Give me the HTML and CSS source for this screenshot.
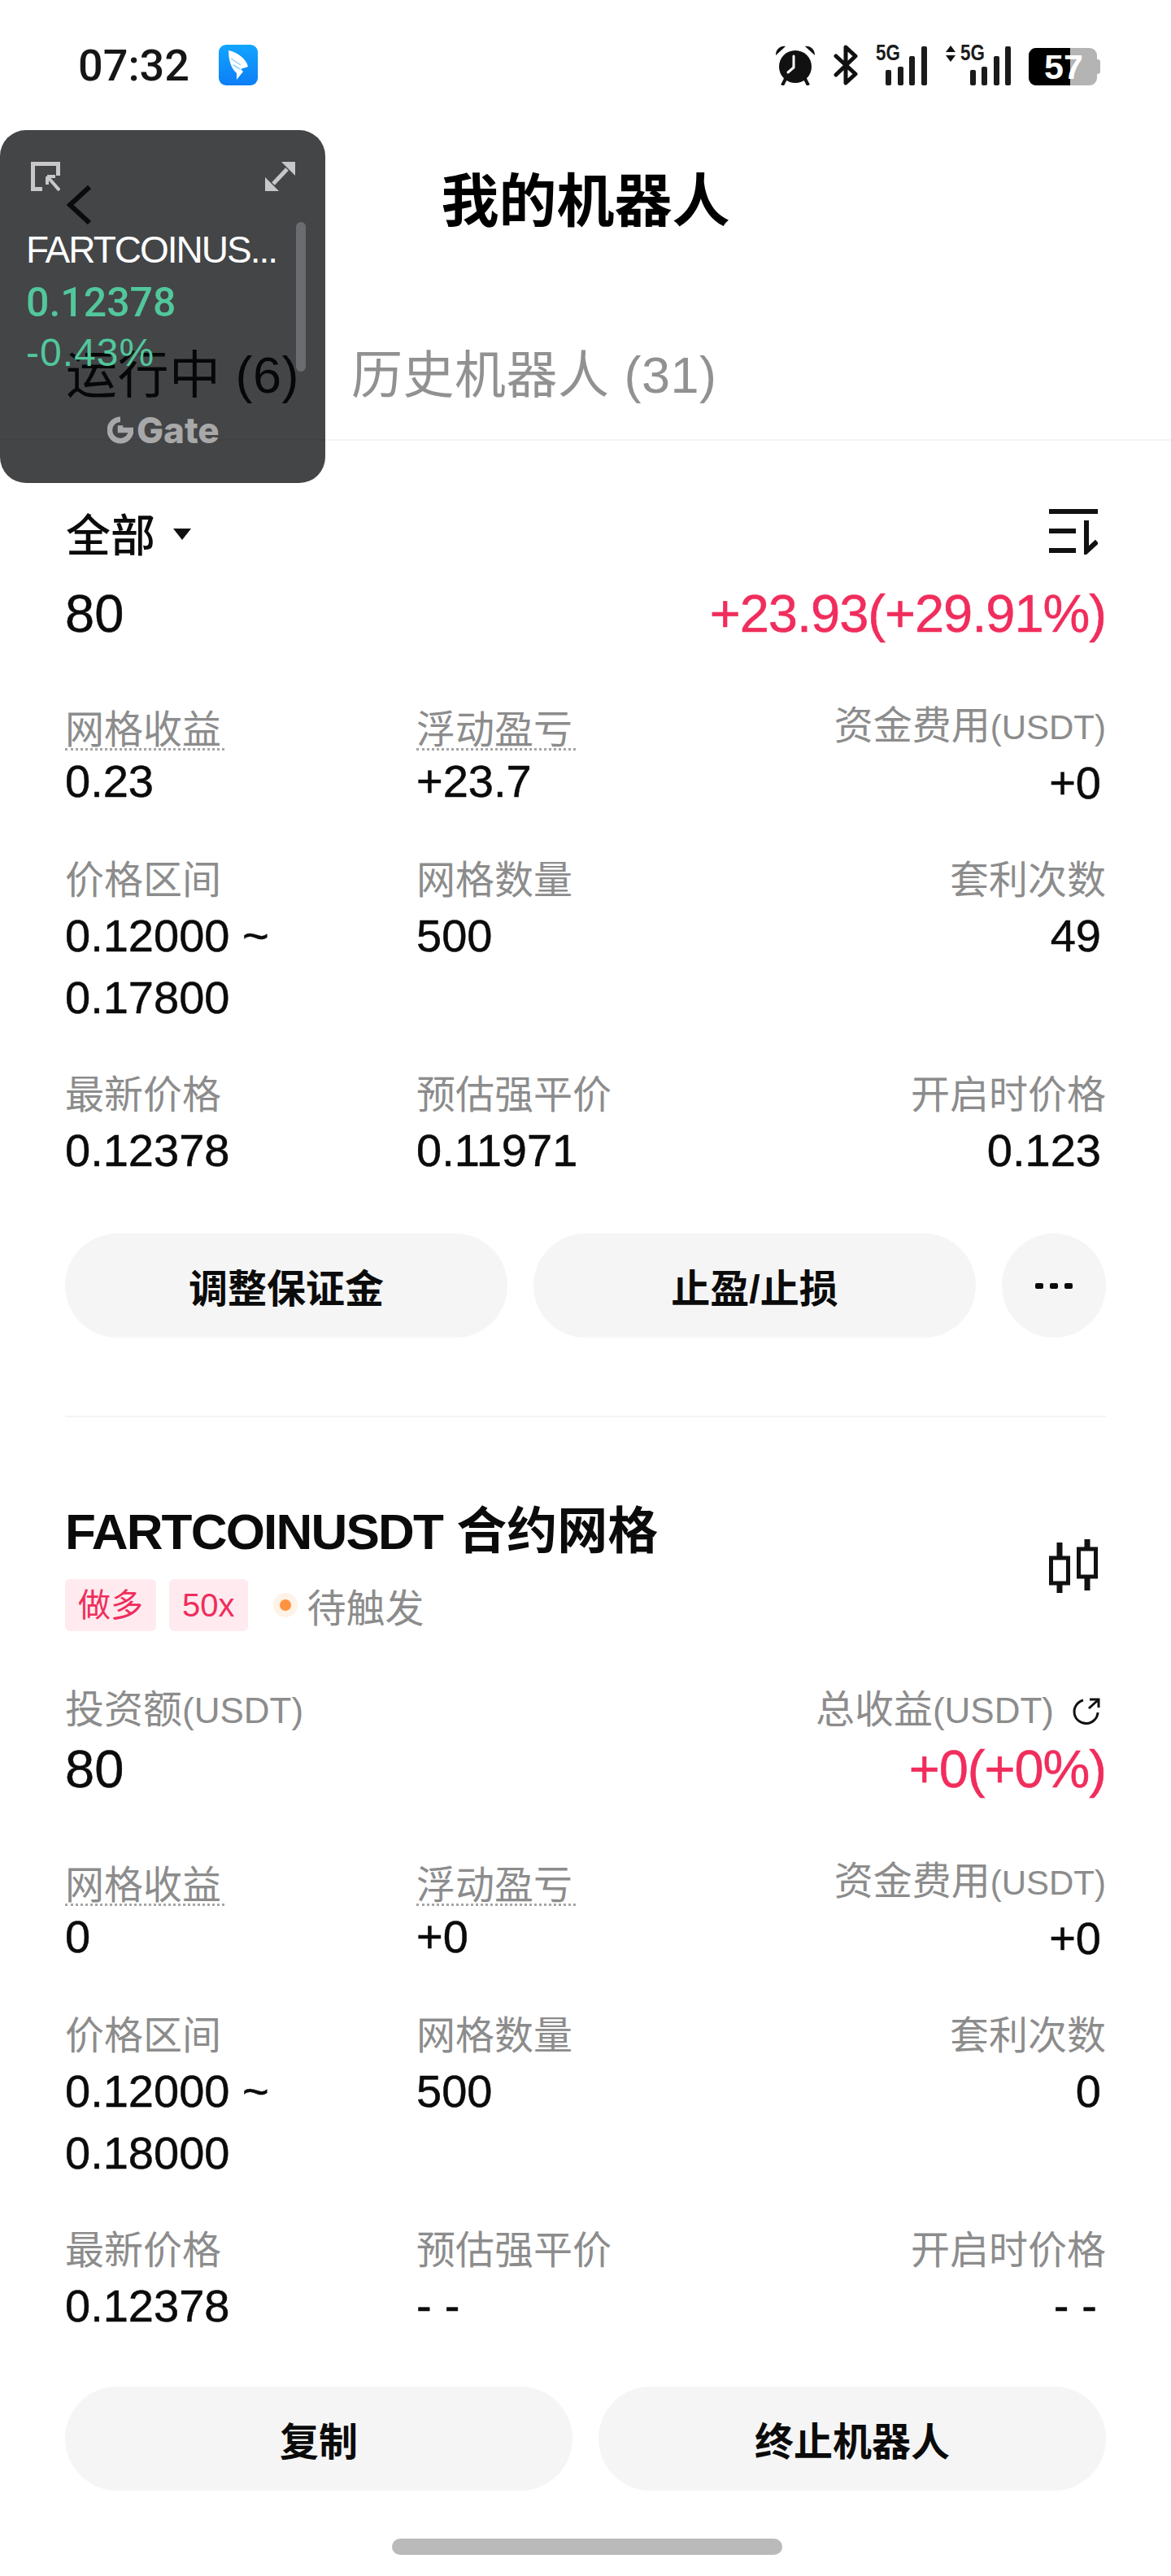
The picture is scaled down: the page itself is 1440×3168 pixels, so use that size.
FILE: index.html
```html
<!DOCTYPE html>
<html>
<head>
<title>我的机器人</title>
<link rel="stylesheet" href="styles.css">
</head>
<body>

<div class="phone">

  <div class="statusbar">
    <div class="status-left">
      <span class="clock">07:32</span>
      <svg class="app-icon" viewBox="0 0 48 50" width="48" height="50">
        <defs><linearGradient id="appBlue" x1="0" y1="0" x2="0" y2="1"><stop offset="0" stop-color="#12a4ff"/><stop offset="1" stop-color="#0d7ef6"/></linearGradient></defs>
        <rect width="48" height="50" rx="9" fill="url(#appBlue)"/>
        <path d="M12 7 C22 9 34 17 36 27 L27 30 L30 33 L22 43 L22 35 C15 29 12 18 12 7 Z" fill="#fff"/>
        <path d="M15 17 L27 25 M18 25 L26 30" stroke="#8fd0ff" stroke-width="1.5" fill="none"/>
      </svg>
    </div>
    <div class="status-right">
      <svg viewBox="0 0 50 50" width="50" height="50">
        <circle cx="25" cy="27" r="20" fill="#111"/>
        <path d="M1 13 C1 5 7 1 13 2 Z M49 13 C49 5 43 1 37 2 Z" fill="#111"/>
        <path d="M9 50 L13 42 M41 50 L37 42" stroke="#111" stroke-width="4"/>
        <path d="M23 14 L23 28 L16 34" stroke="#fff" stroke-width="3" fill="none" stroke-linecap="round"/>
      </svg>
      <svg viewBox="0 0 30 50" width="30" height="50">
        <path d="M3 14 L27 36 L15 47 V3 L27 14 L3 37" stroke="#111" stroke-width="5" fill="none" stroke-linejoin="round" stroke-linecap="round"/>
      </svg>
      <div class="signal">
        <span class="five-g">5G</span>
        <i class="b1"></i><i class="b2"></i><i class="b3"></i><i class="b4"></i>
      </div>
      <div class="signal signal-data">
        <svg class="updown" viewBox="0 0 14 20" width="14" height="20"><path d="M7 0 L13 8 H1 Z M7 20 L13 12 H1 Z" fill="#111"/></svg>
        <span class="five-g">5G</span>
        <i class="b1"></i><i class="b2"></i><i class="b3"></i><i class="b4"></i>
      </div>
      <div class="battery">
        <div class="batt-fill"></div>
        <div class="batt-cap"></div>
        <span class="batt-num">57</span>
      </div>
    </div>
  </div>

  <div class="navbar">
    <svg class="back" viewBox="0 0 34 50" width="34" height="50"><path d="M30 3 L6 25 L30 47" stroke="#222" stroke-width="6" fill="none"/></svg>
    <h1 class="page-title">我的机器人</h1>
  </div>

  <div class="tabs">
    <span class="tab tab-on">运行中 (6)</span>
    <span class="tab">历史机器人 (31)</span>
  </div>

  <div class="filter-row">
    <span class="filter">全部 <b class="caret"></b></span>
    <svg class="sort-icon" viewBox="0 0 60 56" width="60" height="56">
      <path d="M0 3 H60 M0 27 H33 M0 51 H33" stroke="#111" stroke-width="6" fill="none"/>
      <path d="M46 14 V52 L59 40" stroke="#111" stroke-width="6" fill="none"/>
    </svg>
  </div>

  <div class="summary">
    <span class="big">80</span>
    <span class="big red">+23.93(+29.91%)</span>
  </div>

  <div class="grid">
    <div class="cell"><span class="label dotted">网格收益</span><span class="val">0.23</span></div>
    <div class="cell"><span class="label dotted">浮动盈亏</span><span class="val">+23.7</span></div>
    <div class="cell cell-r"><span class="label">资金费用<span class="unit">(USDT)</span></span><span class="val">+0</span></div>

    <div class="cell"><span class="label">价格区间</span><span class="val">0.12000 ~<br>0.17800</span></div>
    <div class="cell"><span class="label">网格数量</span><span class="val">500</span></div>
    <div class="cell cell-r"><span class="label">套利次数</span><span class="val">49</span></div>

    <div class="cell"><span class="label">最新价格</span><span class="val">0.12378</span></div>
    <div class="cell"><span class="label">预估强平价</span><span class="val">0.11971</span></div>
    <div class="cell cell-r"><span class="label">开启时价格</span><span class="val">0.123</span></div>
  </div>

  <div class="actions">
    <button class="btn">调整保证金</button>
    <button class="btn">止盈/止损</button>
    <button class="btn btn-more"><i></i><i></i><i></i></button>
  </div>

  <div class="divider"></div>

  <div class="bot-head">
    <div>
      <h2 class="bot-title"><span class="bot-pair">FARTCOINUSDT</span> 合约网格</h2>
      <div class="tags">
        <span class="tag">做多</span>
        <span class="tag">50x</span>
        <span class="dot"></span>
        <span class="state">待触发</span>
      </div>
    </div>
    <svg class="candle" viewBox="0 0 60 67" width="60" height="67">
      <path d="M13 4 V23 M13 54 V66 M47 0 V12 M47 46 V63" stroke="#111" stroke-width="7" fill="none"/>
      <rect x="2.5" y="23" width="21" height="31" stroke="#111" stroke-width="5" fill="none"/>
      <rect x="36.5" y="12" width="21" height="34" stroke="#111" stroke-width="5" fill="none"/>
    </svg>
  </div>

  <div class="summary-2">
    <div class="cell">
      <span class="label">投资额<span class="unit">(USDT)</span></span>
      <span class="big">80</span>
    </div>
    <div class="cell cell-r">
      <span class="label label-icon"><span>总收益<span class="unit">(USDT)</span></span>
        <svg viewBox="0 0 36 36" width="36" height="36"><path d="M14 5 A14.5 14.5 0 1 0 32 20 M22 4 H33 V14 M32.5 4.5 L21 15" stroke="#111" stroke-width="3" fill="none"/></svg>
      </span>
      <span class="big red">+0(+0%)</span>
    </div>
  </div>

  <div class="grid">
    <div class="cell"><span class="label dotted">网格收益</span><span class="val">0</span></div>
    <div class="cell"><span class="label dotted">浮动盈亏</span><span class="val">+0</span></div>
    <div class="cell cell-r"><span class="label">资金费用<span class="unit">(USDT)</span></span><span class="val">+0</span></div>

    <div class="cell"><span class="label">价格区间</span><span class="val">0.12000 ~<br>0.18000</span></div>
    <div class="cell"><span class="label">网格数量</span><span class="val">500</span></div>
    <div class="cell cell-r"><span class="label">套利次数</span><span class="val">0</span></div>

    <div class="cell"><span class="label">最新价格</span><span class="val">0.12378</span></div>
    <div class="cell"><span class="label">预估强平价</span><span class="val val-none">--</span></div>
    <div class="cell cell-r"><span class="label">开启时价格</span><span class="val val-none">--</span></div>
  </div>

  <div class="actions actions-2">
    <button class="btn">复制</button>
    <button class="btn">终止机器人</button>
  </div>

  <div class="home-bar"></div>

  <!-- floating price window, lies over the page -->
  <div class="float-win">
    <div class="float-icons">
      <svg viewBox="0 0 36 36" width="36" height="36"><path d="M14 33.5 H2.5 V2.5 H33.5 V17" stroke="#c8c8c8" stroke-width="5" fill="none"/><path d="M20 18 H30 M20 18 V28 M21 19 L35 35" stroke="#c8c8c8" stroke-width="4" fill="none"/></svg>
      <svg viewBox="0 0 37 36" width="37" height="36"><path d="M37 0 V17 L20 0 Z M0 36 V19 L17 36 Z" fill="#c8c8c8"/><path d="M10 27 L27 9" stroke="#c8c8c8" stroke-width="5"/></svg>
    </div>
    <div class="float-name">FARTCOINUS...</div>
    <div class="float-price">0.12378</div>
    <div class="float-pct">-0.43%</div>
    <div class="float-logo">
      <svg viewBox="0 0 34 36" width="32" height="36"><path d="M17 4 A14 14 0 1 0 31 18 H17 V12" stroke="#a8a8a8" stroke-width="7" fill="none"/></svg>
      <span>Gate</span>
    </div>
    <div class="float-scroll"></div>
  </div>

</div>

</body>
</html>
```

FILE: styles.css
```css
* {
  box-sizing: border-box;
}

body {
  margin: 0;
  background: #fff;
  font-family: "Liberation Sans", "Noto Sans CJK SC", sans-serif;
  color: #0b0b0b;
}

.phone {
  position: relative;
  width: 1440px;
  height: 3168px;
  padding: 0 80px;
  overflow: hidden;
}

/* status bar */
.statusbar {
  display: flex;
  justify-content: space-between;
  align-items: center;
  height: 56px;
  margin: 52px -9px 0 16px;
}

.status-left {
  display: flex;
  align-items: center;
  gap: 36px;
}

.clock {
  font-family: Roboto, sans-serif;
  font-size: 54px;
  font-weight: 500;
  color: #161616;
}

.status-right {
  display: flex;
  align-items: flex-end;
  gap: 22px;
  margin-right: 16px;
}

.signal {
  position: relative;
  display: flex;
  align-items: flex-end;
  gap: 7.5px;
  height: 50px;
  padding-left: 12px;
}

.signal-data {
  padding-left: 31px;
}

.signal i {
  display: block;
  width: 7px;
  background: #1b1b1b;
  border-radius: 2px;
}

.signal .b1 { height: 19px; }
.signal .b2 { height: 23px; }
.signal .b3 { height: 36px; }
.signal .b4 { height: 48px; }

.five-g {
  position: absolute;
  left: 0;
  top: 0;
  font-size: 28px;
  line-height: 20px;
  font-weight: 700;
  transform: scaleX(0.8);
  transform-origin: left top;
  color: #1b1b1b;
}

.signal-data .five-g {
  left: 19px;
}

.updown {
  position: absolute;
  left: 0;
  top: 1px;
}

.battery {
  position: relative;
  width: 84px;
  height: 46px;
  margin-right: 4px;
  background: #b4b4b4;
  border-radius: 9px;
}

.batt-fill {
  width: 51px;
  height: 46px;
  background: #000;
  border-radius: 9px 0 0 9px;
}

.batt-cap {
  position: absolute;
  left: 84px;
  top: 14px;
  width: 4px;
  height: 18px;
  background: #b4b4b4;
  border-radius: 0 3px 3px 0;
}

.batt-num {
  position: absolute;
  left: 19px;
  top: 0;
  font-size: 43px;
  line-height: 46px;
  font-weight: 700;
  color: #fff;
}

/* title */
.navbar {
  position: relative;
  height: 70px;
  margin-top: 105px;
  text-align: center;
}

.back {
  position: absolute;
  left: 0;
  top: 14px;
}

.page-title {
  margin: 0;
  font-size: 71px;
  line-height: 70px;
  font-weight: 700;
  color: #000;
}

/* tabs */
.tabs {
  display: flex;
  gap: 64px;
  height: 114px;
  margin: 0 -80px;
  padding: 143px 80px 0 81px;
  box-sizing: content-box;
  border-bottom: 2px solid #f4f4f4;
  font-size: 63px;
  line-height: 70px;
  letter-spacing: 0.5px;
}

.tab {
  color: #919191;
}

.tab-on {
  color: #111;
}

/* list head */
.filter-row {
  display: flex;
  justify-content: space-between;
  align-items: center;
  height: 60px;
  margin-top: 82px;
}

.filter {
  display: flex;
  align-items: center;
  gap: 22px;
  margin-left: 1px;
  font-size: 55px;
  font-weight: 500;
}

.caret {
  width: 0;
  height: 0;
  margin-top: 6px;
  border-left: 11px solid transparent;
  border-right: 11px solid transparent;
  border-top: 14px solid #111;
}

.sort-icon {
  margin-right: 10px;
}

.summary {
  display: flex;
  justify-content: space-between;
  margin-top: 33px;
}

.big {
  font-size: 65px;
  line-height: 76px;
  -webkit-text-stroke: 0.5px currentColor;
}

.red {
  color: #f02d5c;
  letter-spacing: -1px;
}

/* data rows */
.grid {
  display: grid;
  grid-template-columns: 432px 1fr 1fr;
  row-gap: 52px;
  margin-top: 70px;
}

.cell {
  display: flex;
  flex-direction: column;
  align-items: flex-start;
}

.cell-r {
  align-items: flex-end;
  text-align: right;
}

.label {
  font-size: 48px;
  line-height: 60px;
  color: #8c8c8c;
  white-space: nowrap;
}

.unit {
  font-size: 42px;
}

.summary-2 .unit {
  font-size: 44px;
}

.dotted {
  height: 50px;
  margin-top: 10px;
  padding-right: 4px;
  line-height: 50px;
  border-bottom: 3px dotted #a6a6a6;
}

.val {
  font-size: 56px;
  line-height: 76px;
  -webkit-text-stroke: 0.5px currentColor;
}

.cell-r .val {
  padding-right: 6px;
}

.val-none {
  letter-spacing: 16px;
}

.cell-r .val-none {
  padding-right: 0;
  margin-right: -5px;
}

/* buttons */
.actions {
  display: flex;
  gap: 32px;
  margin-top: 64px;
}

.btn {
  display: flex;
  justify-content: center;
  align-items: center;
  flex: 1;
  height: 128px;
  border: none;
  border-radius: 64px;
  background: #f5f5f5;
  font-family: inherit;
  font-size: 48px;
  font-weight: 700;
  color: #0b0b0b;
}

.btn-more {
  flex: 0 0 128px;
  gap: 8px;
}

.btn-more i {
  width: 10px;
  height: 7px;
  background: #0b0b0b;
  border-radius: 2px;
}

.divider {
  height: 2px;
  margin-top: 96px;
  background: #f4f4f4;
}

/* second bot */
.bot-head {
  display: flex;
  justify-content: space-between;
  align-items: center;
  margin-top: 101px;
}

.bot-title {
  margin: 0;
  font-size: 62px;
  line-height: 80px;
  font-weight: 700;
}

.bot-pair {
  letter-spacing: -1.8px;
}

.tags {
  display: flex;
  align-items: center;
  gap: 16px;
  margin-top: 15px;
}

.tag {
  padding: 0 16px;
  height: 64px;
  line-height: 64px;
  border-radius: 6px;
  background: #ffebef;
  color: #f02d5c;
  font-size: 40px;
}

.dot {
  width: 14px;
  height: 14px;
  margin: 0 4px 0 23px;
  border-radius: 50%;
  background: #ff9340;
  box-shadow: 0 0 0 8px #fff2e6;
}

.state {
  font-size: 48px;
  color: #8c8c8c;
}

.candle {
  margin-right: 10px;
}

.summary-2 {
  display: flex;
  justify-content: space-between;
  margin-top: 64px;
}

.summary-2 .big {
  margin-top: 4px;
}

.label-icon {
  display: flex;
  align-items: center;
  gap: 22px;
  padding-right: 6px;
}

.actions-2 {
  margin-top: 61px;
}

.home-bar {
  position: absolute;
  left: 482px;
  top: 3122px;
  width: 480px;
  height: 20px;
  border-radius: 10px;
  background: #bababa;
}

/* floating window */
.float-win {
  position: absolute;
  left: 0;
  top: 160px;
  width: 400px;
  height: 434px;
  padding: 39px 32px 0 32px;
  border-radius: 32px;
  background: rgba(1, 4, 7, 0.74);
  color: #fff;
}

.float-icons {
  display: flex;
  justify-content: space-between;
  padding-left: 6px;
  margin-right: 5px;
}

.float-name {
  margin-top: 44px;
  font-size: 46px;
  line-height: 56px;
  letter-spacing: -2px;
  white-space: nowrap;
}

.float-price {
  margin-top: 7px;
  font-family: Roboto, sans-serif;
  font-size: 50px;
  line-height: 60px;
  font-weight: 500;
  color: #52c79c;
}

.float-pct {
  margin-top: 4px;
  font-size: 48px;
  line-height: 56px;
  letter-spacing: 1px;
  color: #52c79c;
}

.float-logo {
  position: absolute;
  left: 132px;
  top: 349px;
  display: flex;
  align-items: center;
  gap: 4px;
  font-family: Inter, sans-serif;
  font-size: 44px;
  line-height: 40px;
  font-weight: 800;
  color: #a8a8a8;
}

.float-scroll {
  position: absolute;
  left: 364px;
  top: 113px;
  width: 12px;
  height: 184px;
  border-radius: 6px;
  background: #6a6c70;
}
```
